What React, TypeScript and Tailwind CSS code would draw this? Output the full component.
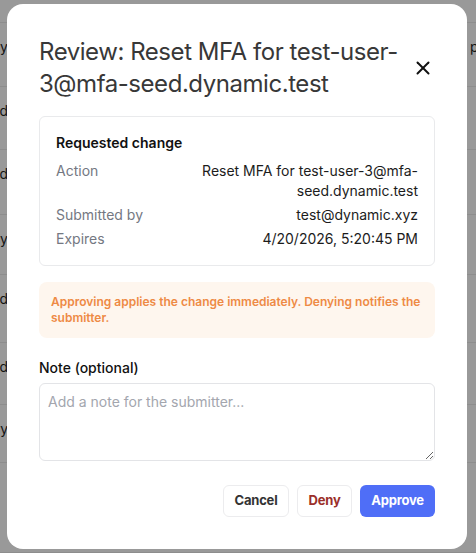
import React from "react";

const rows = [
  { h: "h-[64px]", left: "Identity", right: "p" },
  { h: "h-[63px]", left: "Verified", right: "" },
  { h: "h-[65px]", left: "Approved", right: "" },
  { h: "h-[60px]", left: "Pending Policy", right: "" },
  { h: "h-[68px]", left: "Expired", right: "" },
  { h: "h-[62px]", left: "Denied", right: "" },
  { h: "h-[58px]", left: "Recovery", right: "" },
  { h: "h-[90px]", left: "", right: "" },
];

function XIcon() {
  return (
    <svg width="24" height="24" viewBox="0 0 24 24" fill="none" stroke="#111" strokeWidth="2" strokeLinecap="round" strokeLinejoin="round">
      <path d="M17.5 6.5 6.5 17.5" />
      <path d="m6.5 6.5 11 11" />
    </svg>
  );
}

export default function App() {
  return (
    <div className="relative w-[476px] h-[553px] overflow-hidden bg-white" style={{ fontFamily: '"Inter", "Liberation Sans", sans-serif' }}>
      {/* background page */}
      <div className="flex flex-col text-sm text-[#1f1f1f]">
        <div className="h-[23px] border-b border-[#ececec]" />
        {rows.map((r, i) => (
          <div key={i} className={`${r.h} border-b border-[#ececec] flex items-start justify-between pt-[14px]`}>
            <div className="w-[8px] overflow-hidden flex justify-end">
              <span className="whitespace-nowrap leading-5">{r.left}</span>
            </div>
            <div className="w-[6px] overflow-hidden">
              <span className="whitespace-nowrap leading-5">{r.right}</span>
            </div>
          </div>
        ))}
      </div>

      {/* overlay */}
      <div className="absolute inset-0 bg-black/40 flex items-center justify-center">
        <div className="w-[460px] -translate-x-px bg-white rounded-[16px] p-8 flex flex-col">
          <div className="flex items-center gap-1">
            <h2 className="flex-1 text-[24px] leading-8 font-normal tracking-[-0.45px] text-[#383838]">
              Review: Reset MFA for test-user-3@mfa-seed.dynamic.test
            </h2>
            <button className="w-6 h-6 flex items-center justify-center shrink-0">
              <XIcon />
            </button>
          </div>

          <div className="mt-4 border border-[#e9eaec] rounded-md p-4">
            <div className="text-sm leading-5 font-semibold text-[#111] mb-2">Requested change</div>
            <div className="flex flex-col gap-1 text-sm leading-5">
              <div className="flex justify-between gap-4">
                <span className="shrink-0 text-[#747882]">Action</span>
                <span className="text-right text-[#1c1c1c] max-w-[240px]">Reset MFA for test-user-3@mfa-seed.dynamic.test</span>
              </div>
              <div className="flex justify-between gap-4">
                <span className="shrink-0 text-[#747882]">Submitted by</span>
                <span className="text-right text-[#1c1c1c]">test@dynamic.xyz</span>
              </div>
              <div className="flex justify-between gap-4">
                <span className="shrink-0 text-[#747882]">Expires</span>
                <span className="text-right text-[#1c1c1c]">4/20/2026, 5:20:45 PM</span>
              </div>
            </div>
          </div>

          <div className="mt-4 rounded-lg bg-[#fef6ee] p-3 text-xs leading-4 font-semibold text-[#ee8a45]">
            Approving applies the change immediately. Denying notifies the submitter.
          </div>

          <label className="mt-5 mb-[5px] text-sm leading-5 font-medium text-[#111]">Note (optional)</label>
          <textarea
            rows={3}
            placeholder="Add a note for the submitter..."
            className="block w-full border border-[#e3e4e7] rounded-md p-2 text-sm leading-5 text-[#111] placeholder:text-[#a3a6ae] outline-none"
          />

          <div className="mt-6 flex justify-end gap-2">
            <button className="h-8 w-[66px] flex items-center justify-center rounded-md border border-[#ececee] bg-white text-[13px] font-bold tracking-[-0.2px] text-[#333]">Cancel</button>
            <button className="h-8 w-[55px] flex items-center justify-center rounded-md border border-[#ececee] bg-white text-[13px] font-bold tracking-[-0.2px] text-[#9b2f2a]">Deny</button>
            <button className="h-8 w-[75px] flex items-center justify-center rounded-md bg-[#4f6ef7] text-[13px] font-bold tracking-[-0.2px] text-white">Approve</button>
          </div>
        </div>
      </div>
    </div>
  );
}
